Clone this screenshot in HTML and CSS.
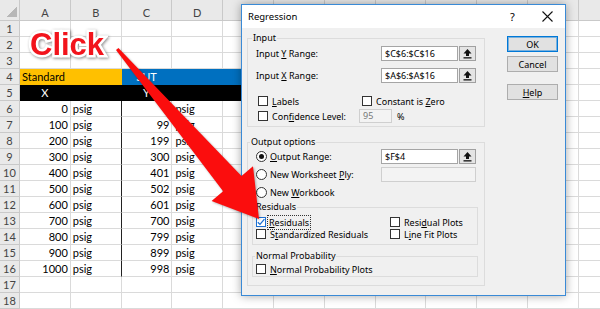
FILE: index.html
```html
<!DOCTYPE html>
<html lang="en-US">
    <head>
        <meta charset="utf-8">
        <title>Regression</title>
        <meta name="viewport" content="width=device-width, initial-scale=1">
        <link rel="stylesheet" href="styles.css">
    </head>

    <body>
    <div class="screen">

        <table class="sheet">
            <colgroup><col class="rowhead"><col span="12" class="col"></colgroup>
            <tr class="colheads"><th class="corner"></th><th>A</th><th>B</th><th>C</th><th>D</th><th></th><th></th><th></th><th></th><th></th><th></th><th></th><th></th></tr>
            <tr><th>1</th><td></td><td></td><td></td><td></td><td></td><td></td><td></td><td></td><td></td><td></td><td></td><td></td></tr>
            <tr><th>2</th><td></td><td></td><td></td><td></td><td></td><td></td><td></td><td></td><td></td><td></td><td></td><td></td></tr>
            <tr><th>3</th><td></td><td></td><td></td><td></td><td></td><td></td><td></td><td></td><td></td><td></td><td></td><td></td></tr>
            <tr><th>4</th><td class="yel" colspan="2">Standard</td><td class="blu mid">SUT</td><td class="blu"></td><td class="blu"></td><td></td><td></td><td></td><td></td><td></td><td></td><td></td></tr>
            <tr><th>5</th><td class="blk">X</td><td class="blk"></td><td class="blk">Y</td><td class="blk"></td><td class="blk"></td><td></td><td></td><td></td><td></td><td></td><td></td><td></td></tr>
            <tr><th>6</th><td class="num">0</td><td class="sep">psig</td><td class="num">0</td><td class="unit">psig</td><td></td><td></td><td></td><td></td><td></td><td></td><td></td><td></td></tr>
            <tr><th>7</th><td class="num">100</td><td class="sep">psig</td><td class="num">99</td><td class="unit">psig</td><td></td><td></td><td></td><td></td><td></td><td></td><td></td><td></td></tr>
            <tr><th>8</th><td class="num">200</td><td class="sep">psig</td><td class="num">199</td><td class="unit">psig</td><td></td><td></td><td></td><td></td><td></td><td></td><td></td><td></td></tr>
            <tr><th>9</th><td class="num">300</td><td class="sep">psig</td><td class="num">300</td><td class="unit">psig</td><td></td><td></td><td></td><td></td><td></td><td></td><td></td><td></td></tr>
            <tr><th>10</th><td class="num">400</td><td class="sep">psig</td><td class="num">401</td><td class="unit">psig</td><td></td><td></td><td></td><td></td><td></td><td></td><td></td><td></td></tr>
            <tr><th>11</th><td class="num">500</td><td class="sep">psig</td><td class="num">502</td><td class="unit">psig</td><td></td><td></td><td></td><td></td><td></td><td></td><td></td><td></td></tr>
            <tr><th>12</th><td class="num">600</td><td class="sep">psig</td><td class="num">601</td><td class="unit">psig</td><td></td><td></td><td></td><td></td><td></td><td></td><td></td><td></td></tr>
            <tr><th>13</th><td class="num">700</td><td class="sep">psig</td><td class="num">700</td><td class="unit">psig</td><td></td><td></td><td></td><td></td><td></td><td></td><td></td><td></td></tr>
            <tr><th>14</th><td class="num">800</td><td class="sep">psig</td><td class="num">799</td><td class="unit">psig</td><td></td><td></td><td></td><td></td><td></td><td></td><td></td><td></td></tr>
            <tr><th>15</th><td class="num">900</td><td class="sep">psig</td><td class="num">899</td><td class="unit">psig</td><td></td><td></td><td></td><td></td><td></td><td></td><td></td><td></td></tr>
            <tr><th>16</th><td class="num">1000</td><td class="sep">psig</td><td class="num">998</td><td class="unit">psig</td><td></td><td></td><td></td><td></td><td></td><td></td><td></td><td></td></tr>
            <tr><th>17</th><td></td><td></td><td></td><td></td><td></td><td></td><td></td><td></td><td></td><td></td><td></td><td></td></tr>
            <tr><th>18</th><td></td><td></td><td></td><td></td><td></td><td></td><td></td><td></td><td></td><td></td><td></td><td></td></tr>
        </table>

        <div class="click">Click</div>

        <!-- Regression dialog -->
        <div class="dialog">
            <div class="titlebar">
                <span class="title">Regression</span>
                <span class="tb-btn">?</span>
                <span class="tb-btn">
                    <svg width="11" height="11" viewBox="0 0 11 11"><path d="M0.5 0.5 L10.5 10.5 M10.5 0.5 L0.5 10.5" stroke="#111" stroke-width="1.1" fill="none"/></svg>
                </span>
            </div>

            <div class="dlg-body">
                <div class="groups">
                    <fieldset class="grp grp-input">
                        <legend>Input</legend>
                        <div class="row r-y">
                            <span class="lbl"><span>Input <u>Y</u> Range:</span></span>
                            <span class="field">$C$6:$C$16</span>
                            <span class="pick"><svg width="9" height="10" viewBox="0 0 9 10"><path d="M4.5 0 L8.5 4.5 L6 4.5 L6 7 L3 7 L3 4.5 L0.5 4.5 Z" fill="#111"/><rect x="0.5" y="8.2" width="8" height="1.3" fill="#111"/></svg></span>
                        </div>
                        <div class="row r-x">
                            <span class="lbl"><span>Input <u>X</u> Range:</span></span>
                            <span class="field">$A$6:$A$16</span>
                            <span class="pick"><svg width="9" height="10" viewBox="0 0 9 10"><path d="M4.5 0 L8.5 4.5 L6 4.5 L6 7 L3 7 L3 4.5 L0.5 4.5 Z" fill="#111"/><rect x="0.5" y="8.2" width="8" height="1.3" fill="#111"/></svg></span>
                        </div>
                        <div class="row r-chk">
                            <span class="opt w-labels"><span class="cb"></span><span><u>L</u>abels</span></span>
                            <span class="opt"><span class="cb"></span><span>Constant is <u>Z</u>ero</span></span>
                        </div>
                        <div class="row r-conf">
                            <span class="opt w-conf"><span class="cb"></span><span>Con<u>f</u>idence Level:</span></span>
                            <span class="field small off">95</span>
                            <span class="pct">%</span>
                        </div>
                    </fieldset>

                    <fieldset class="grp grp-output">
                        <legend>Output options</legend>
                        <div class="row r-out">
                            <span class="lbl"><span class="rb on"></span><span><u>O</u>utput Range:</span></span>
                            <span class="field">$F$4</span>
                            <span class="pick"><svg width="9" height="10" viewBox="0 0 9 10"><path d="M4.5 0 L8.5 4.5 L6 4.5 L6 7 L3 7 L3 4.5 L0.5 4.5 Z" fill="#111"/><rect x="0.5" y="8.2" width="8" height="1.3" fill="#111"/></svg></span>
                        </div>
                        <div class="row r-ply">
                            <span class="lbl"><span class="rb"></span><span>New Worksheet <u>P</u>ly:</span></span>
                            <span class="field wide off"></span>
                        </div>
                        <div class="row r-book">
                            <span class="lbl"><span class="rb"></span><span>New <u>W</u>orkbook</span></span>
                        </div>

                        <fieldset class="grp inner grp-resid">
                            <legend>Residuals</legend>
                            <div class="row r-res1">
                                <span class="opt w-res"><span class="cb checked"><svg width="8" height="8" viewBox="0 0 8 8"><path d="M0.8 4.2 L3 6.4 L7.4 1.2" stroke="#1b6fd1" stroke-width="1.3" fill="none"/></svg></span><span class="focus"><u>R</u>esiduals</span></span>
                                <span class="opt"><span class="cb"></span><span>Resi<u>d</u>ual Plots</span></span>
                            </div>
                            <div class="row r-res2">
                                <span class="opt w-res"><span class="cb"></span><span>S<u>t</u>andardized Residuals</span></span>
                                <span class="opt"><span class="cb"></span><span>L<u>i</u>ne Fit Plots</span></span>
                            </div>
                        </fieldset>

                        <fieldset class="grp inner grp-norm">
                            <legend>Normal Probability</legend>
                            <div class="row r-norm">
                                <span class="opt"><span class="cb"></span><span><u>N</u>ormal Probability Plots</span></span>
                            </div>
                        </fieldset>
                    </fieldset>
                </div>

                <div class="buttons">
                    <button class="btn default">OK</button>
                    <button class="btn">Cancel</button>
                    <button class="btn help"><u>H</u>elp</button>
                </div>
            </div>
        </div>

        <svg class="arrow" width="600" height="309" viewBox="0 0 600 309">
            <polygon points="118.4,48 241.5,175.9 253,166.3 259,219 211.6,200.9 223.1,191.3 116,50" fill="#fb0d0d"/>
        </svg>

    </div>
    </body>
</html>
```

FILE: styles.css
```css
* {
    box-sizing: border-box;
}

html, body {
    margin: 0;
    padding: 0;
    background: #fff;
}

.screen {
    position: relative;
    width: 600px;
    height: 309px;
    overflow: hidden;
}

/* spreadsheet */
.sheet {
    border-collapse: separate;
    border-spacing: 0;
    table-layout: fixed;
    width: 629.6px;
    font: 11px Lato, "Liberation Sans", sans-serif;
    color: #000;
}

.sheet col.rowhead {
    width: 20px;
}

.sheet col.col {
    width: 50.8px;
}

.sheet th, .sheet td {
    height: 16px;
    padding: 0 2px;
    line-height: 15px;
    border-right: 1px solid #dadada;
    border-bottom: 1px solid #dadada;
    white-space: nowrap;
    overflow: hidden;
}

.sheet th {
    background: #e9e9e9;
    color: #444;
    font-weight: normal;
    text-align: center;
    border-color: #c9c9c9;
    padding: 0;
}

.sheet .colheads th {
    height: 21px;
    line-height: 12px;
    vertical-align: bottom;
    padding-bottom: 1px;
}

.sheet th.corner {
    background-color: #e9e9e9;
    background-image: linear-gradient(135deg, transparent 50%, #b7b7b7 50%);
    background-size: 10px 10px;
    background-position: 7px 7px;
    background-repeat: no-repeat;
}

.sheet td.num {
    text-align: right;
}

.sheet td.unit {
    padding-left: 3px;
}

.sheet td.sep {
    border-right-color: #222;
}

.sheet td.yel {
    background: #ffc000;
    border-color: #ffc000;
}

.sheet td.blu {
    background: #0070c0;
    border-color: #0070c0;
    color: #fff;
}

.sheet td.mid {
    text-align: center;
}

.sheet td.blk {
    background: #000;
    border-color: #000;
    color: #fff;
    text-align: center;
}

/* overlay text and arrow */
.click {
    position: absolute;
    left: 30px;
    top: 29px;
    font: bold 31px/31px "Liberation Sans", Arial, sans-serif;
    color: #f2141c;
    -webkit-text-stroke: 5px #fff;
    paint-order: stroke fill;
    filter: drop-shadow(1px 1px 1.5px rgba(0, 0, 0, 0.45));
}

.arrow {
    position: absolute;
    left: 0;
    top: 0;
    filter: drop-shadow(1px 1px 1px rgba(0, 0, 0, 0.3));
}

/* dialog window */
.dialog {
    position: absolute;
    left: 241px;
    top: 4px;
    width: 325px;
    height: 292px;
    border: 1px solid #3a8ad6;
    background: #f0f0f0;
    box-shadow: 0 0 9px rgba(0, 0, 0, 0.35);
    font: 9px "Noto Sans", "Open Sans", sans-serif;
    color: #000;
}

.titlebar {
    height: 23px;
    background: #fff;
    display: flex;
    align-items: center;
    padding-left: 6px;
    font-size: 9.5px;
}

.titlebar .title {
    flex: 1;
}

.tb-btn {
    width: 35px;
    height: 23px;
    display: flex;
    align-items: center;
    justify-content: center;
    font-size: 11px;
}

.dlg-body {
    display: flex;
    padding: 4px 0 0 5px;
}

.groups {
    width: 238px;
}

.grp {
    margin: 0;
    padding: 0 0 0 8px;
    border: 1px solid #dcdcdc;
    min-width: 0;
}

.grp legend {
    padding: 0 1px;
    margin-left: -4px;
    line-height: 12px;
    font-size: 9px;
}

.grp-input {
    padding-bottom: 3px;
}

.grp-output {
    margin-top: 9px;
    padding-left: 8px;
    padding-bottom: 8px;
}

.grp.inner {
    width: 226px;
    margin-left: -4px;
    padding-left: 3px;
}

.grp-output legend {
    margin-left: -6px;
}

.grp.inner legend {
    margin-left: -1px;
}

.grp-resid {
    margin-top: 3px;
    padding-bottom: 4px;
}

.grp-norm {
    margin-top: 5px;
    padding-bottom: 1px;
}

.row {
    display: flex;
    align-items: center;
    height: 15px;
    white-space: nowrap;
}

.r-y { margin-top: 2px; }
.r-x { margin-top: 7px; }
.r-chk { margin-top: 12px; height: 12px; }
.r-conf { margin-top: 2px; height: 14px; }
.r-out { margin-top: 1px; }
.r-ply { margin-top: 3px; }
.r-book { margin-top: 4px; height: 12px; }
.r-res1 { margin-top: 3px; height: 12px; }
.r-res2 { height: 12px; }
.r-norm { margin-top: 1px; height: 12px; }

.lbl {
    width: 125px;
    display: flex;
    align-items: center;
}

.field {
    width: 77px;
    height: 15px;
    background: #fff;
    border: 1px solid #a5a5a5;
    padding-left: 3px;
    line-height: 13px;
}

.field.small {
    width: 33px;
    height: 14px;
    line-height: 12px;
}

.field.wide {
    width: 95px;
}

.field.off {
    background: #f3f3f3;
    border-color: #cfcfcf;
    color: #777;
}

.pick {
    width: 17px;
    height: 15px;
    margin-left: 1px;
    background: #e4e4e4;
    border: 1px solid #a0a0a0;
    display: flex;
    align-items: center;
    justify-content: center;
}

.pct {
    margin-left: 5px;
}

.opt {
    display: flex;
    align-items: center;
}

.w-labels {
    width: 104px;
    margin-left: 2px;
}

.w-conf {
    width: 101px;
    margin-left: 2px;
}

.w-res {
    width: 134px;
}

.cb {
    width: 10px;
    height: 10px;
    border: 1px solid #333;
    background: #fff;
    margin-right: 4px;
    flex: none;
    display: flex;
    align-items: center;
    justify-content: center;
}

.cb.checked {
    border-color: #1b6fd1;
}

.rb {
    width: 11px;
    height: 11px;
    border: 1px solid #333;
    border-radius: 50%;
    background: #fff;
    margin-right: 3px;
    flex: none;
    display: flex;
    align-items: center;
    justify-content: center;
}

.rb.on::after {
    content: "";
    width: 5px;
    height: 5px;
    border-radius: 50%;
    background: #111;
}

.focus {
    outline: 1px dotted #333;
    outline-offset: 0;
    padding: 0 1px;
    margin-left: -2px;
}

.buttons {
    margin-left: 22px;
    width: 51px;
    padding-top: 4px;
    display: flex;
    flex-direction: column;
}

.btn {
    height: 16px;
    margin: 0 0 4px 0;
    padding: 0;
    background: #e1e1e1;
    border: 1px solid #adadad;
    font: 9px "Noto Sans", "Open Sans", sans-serif;
    color: #000;
    line-height: 13px;
}

.btn.default {
    border-color: #0078d7;
    box-shadow: inset 0 0 0 1px rgba(0, 120, 215, 0.45);
}

.btn.help {
    margin-top: 8px;
}
```
